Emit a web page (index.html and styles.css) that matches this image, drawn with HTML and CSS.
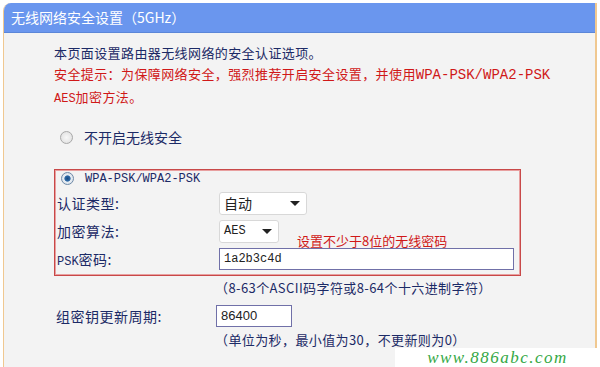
FILE: index.html
```html
<!DOCTYPE html>
<html lang="zh-CN">
  <head>
    <meta charset="UTF-8" />
    <title>无线网络安全设置</title>
    <link rel="stylesheet" href="styles.css">
  </head>
  <body>
    <div class="panel">
      <div class="panel-title">无线网络安全设置（5GHz）</div>
      <div class="panel-body">
        <div class="intro">
          <p>本页面设置路由器无线网络的安全认证选项。</p>
          <p class="warn">安全提示：为保障网络安全，强烈推荐开启安全设置，并使用<span class="mono big">WPA-PSK/WPA2-PSK</span></p>
          <p class="warn"><span class="mono">AES</span>加密方法。</p>
        </div>

        <div class="radio-row off">
          <span class="radio"></span>
          <span>不开启无线安全</span>
        </div>

        <div class="wpa-box">
          <div class="radio-row">
            <span class="radio checked"></span>
            <span class="mono">WPA-PSK/WPA2-PSK</span>
          </div>
          <div class="field first">
            <label>认证类型:</label>
            <div class="select wide">自动<span class="arrow"></span></div>
          </div>
          <div class="field">
            <label>加密算法:</label>
            <div class="select narrow"><span class="mono">AES</span><span class="arrow"></span></div>
            <span class="tip">设置不少于8位的无线密码</span>
          </div>
          <div class="field">
            <label><span class="mono">PSK</span>密码:</label>
            <div class="text-input long mono">1a2b3c4d</div>
          </div>
        </div>

        <div class="hint">（8-63个ASCII码字符或8-64个十六进制字符）</div>

        <div class="field group">
          <label>组密钥更新周期:</label>
          <div class="text-input short">86400</div>
        </div>
        <div class="hint last">（单位为秒，最小值为30，不更新则为0）</div>
      </div>
    </div>

    <div class="watermark">www.886abc.com</div>
  </body>
</html>
```

FILE: styles.css
```css
body {
  margin: 0;
  background: #ffffff;
  font-family: "Noto Sans CJK SC", "DejaVu Sans", sans-serif;
  font-size: 13px;
  color: #1c2a66;
  overflow: hidden;
}
p {
  margin: 0;
}
.panel {
  margin: 3px 3px 0 3px;
  height: 364px;
  background: #f3f3f3;
  border-left: 1px solid #f0c890;
  border-right: 2px solid #f0c890;
  border-top-left-radius: 8px;
  overflow: hidden;
}
.panel-title {
  height: 29px;
  line-height: 29px;
  padding-left: 7px;
  background: #6a96ee;
  border-bottom: 1px solid #5b86d8;
  color: #ffffff;
  font-size: 14px;
}
.panel-body {
  padding: 9px 0 0 50px;
}
.intro p {
  line-height: 21px;
  letter-spacing: 0.4px;
}
.intro .warn {
  color: #d01818;
}
.mono {
  font-family: "Liberation Mono", "DejaVu Sans Mono", monospace;
  font-size: 12px;
  letter-spacing: 0;
}
.mono.big {
  font-size: 14px;
}
.radio-row {
  display: flex;
  align-items: center;
  gap: 11px;
  padding-left: 6px;
  height: 20px;
}
.radio-row.off {
  margin-top: 17px;
  margin-bottom: 22px;
  font-size: 14px;
}
.radio {
  width: 11px;
  height: 11px;
  border-radius: 50%;
  border: 1px solid #a8a8a8;
  background: radial-gradient(circle, #f8f8f8 0, #dcdcdc 100%);
}
.radio.checked {
  border-color: #6e8aa8;
  background: radial-gradient(circle, #1a4a80 0, #2e6aa8 35%, #e8eef4 45%, #d0d8e0 100%);
}
.wpa-box {
  width: 465px;
  border: 1px solid #c84848;
  box-shadow: inset 0 0 0 1px #e8a0a0;
  padding: 0 0 2px 0;
}
.wpa-box .radio-row {
  height: 15px;
  margin-top: 1px;
}
.field {
  display: flex;
  align-items: center;
  height: 28px;
  font-size: 14px;
}
.field.first {
  margin-top: 3px;
}
.field label {
  width: 162px;
  padding-left: 2px;
  letter-spacing: 0.5px;
}
.select {
  display: flex;
  align-items: center;
  justify-content: space-between;
  height: 21px;
  padding: 0 6px 0 4px;
  background: #ffffff;
  border: 1px solid #d8d8d8;
  border-radius: 3px;
  color: #222222;
}
.select.wide {
  width: 76px;
}
.select.narrow {
  width: 48px;
}
.arrow {
  width: 0;
  height: 0;
  border-left: 5px solid transparent;
  border-right: 5px solid transparent;
  border-top: 5px solid #222222;
}
.tip {
  margin-left: 18px;
  margin-top: 18px;
  color: #d01818;
  font-size: 13px;
}
.text-input {
  height: 20px;
  line-height: 20px;
  padding-left: 4px;
  background: #ffffff;
  border: 1px solid #7070a8;
  color: #222222;
}
.text-input.long {
  width: 289px;
}
.text-input.short {
  width: 70px;
  font-family: "Liberation Sans", sans-serif;
  font-size: 13px;
}
.hint {
  padding-left: 161px;
  height: 22px;
  line-height: 22px;
  letter-spacing: 0.4px;
}
.wpa-box + .hint {
  margin-top: 1px;
}
.hint.last {
  height: 18px;
  line-height: 18px;
  margin-top: 1px;
}
.group {
  margin-top: 3px;
  height: 28px;
}
.group label {
  width: 160px;
}
.watermark {
  position: absolute;
  left: 395px;
  top: 348px;
  width: 205px;
  height: 19px;
  background: #ffffff;
  color: #35a845;
  font-family: "Liberation Serif", serif;
  font-style: italic;
  font-size: 17px;
  line-height: 19px;
  text-align: center;
  letter-spacing: 1.5px;
}
```
